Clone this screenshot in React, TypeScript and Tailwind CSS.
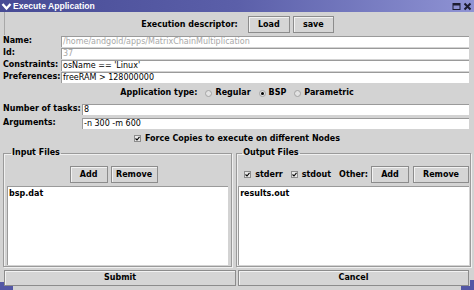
import React from "react";

const font = "font-['DejaVu_Sans',sans-serif]";

function Btn({ children, className = "" }: { children: React.ReactNode; className?: string }) {
  return (
    <div
      className={`flex items-center justify-center border border-[#8c8c8c] bg-[#d5d5d5] text-[8px] font-bold text-black shadow-[inset_1px_1px_0_#f2f2f2] ${className}`}
    >
      {children}
    </div>
  );
}

function Field({ value, disabled = false }: { value: string; disabled?: boolean }) {
  return (
    <div
      className={`flex h-[11px] flex-1 items-center overflow-hidden border-t border-l border-[#9a9a9a] bg-white pl-[1px] text-[8px] font-normal leading-none ${
        disabled ? "text-[#a8a8a8]" : "text-black"
      }`}
    >
      {value}
    </div>
  );
}

function Radio({ label, checked = false }: { label: string; checked?: boolean }) {
  return (
    <div className="flex items-center gap-[3px]">
      <span className="flex h-[7px] w-[7px] items-center justify-center rounded-full border border-[#a4a4a4] bg-[#e2e2e2]">
        {checked && <span className="h-[3px] w-[3px] rounded-full bg-black" />}
      </span>
      <span>{label}</span>
    </div>
  );
}

function Check({ label }: { label: string }) {
  return (
    <div className="flex items-center gap-[4px]">
      <span className="flex h-[7px] w-[7px] items-center justify-center border border-[#8c8c8c] bg-[#e8e8e8]">
        <svg width="5" height="5" viewBox="0 0 5 5">
          <path d="M0.5 2.5 L2 4 L4.5 0.8" stroke="#000" strokeWidth="1.1" fill="none" />
        </svg>
      </span>
      <span>{label}</span>
    </div>
  );
}

function Panel({ title, className = "", children }: { title: string; className?: string; children: React.ReactNode }) {
  return (
    <fieldset
      className={`flex flex-col border border-[#9a9a9a] shadow-[1px_1px_0_#f0f0f0,inset_1px_1px_0_#f0f0f0] ${className}`}
    >
      <legend className="ml-[4px] px-[1px] text-[8px] font-bold leading-[10px]">{title}</legend>
      {children}
    </fieldset>
  );
}

export default function App() {
  return (
    <div className={`relative flex h-[290px] w-[474px] flex-col overflow-hidden bg-[#d3d3d3] text-black ${font}`}>
      {/* title bar */}
      <div className="flex h-[12px] shrink-0 items-center bg-gradient-to-r from-[#474b95] via-[#5b5fa9] to-[#8f93d4]">
        <svg width="11" height="11" viewBox="0 0 11 11" className="ml-[1px]">
          <path d="M1.5 3 L5.5 7.5 L9.5 3" stroke="#fff" strokeWidth="2.4" fill="none" />
        </svg>
        <span className="ml-[1px] font-['Liberation_Sans',sans-serif] text-[8.6px] font-bold leading-none text-white">
          Execute Application
        </span>
        <div className="ml-auto mr-[2px] flex items-center gap-[2px]">
          <svg width="9" height="9" viewBox="0 0 9 9">
            <rect x="1" y="1.5" width="7" height="6" fill="none" stroke="#1c1c30" strokeWidth="1" />
            <rect x="1" y="1.5" width="7" height="2" fill="#1c1c30" />
          </svg>
          <svg width="9" height="9" viewBox="0 0 9 9">
            <path d="M1.5 1.5 L7.5 7.5 M7.5 1.5 L1.5 7.5" stroke="#1c1c30" strokeWidth="2" />
          </svg>
        </div>
      </div>

      {/* descriptor row */}
      <div className="ml-[4px] flex h-[23px] shrink-0 items-center justify-center border-l border-[#a8a8a8] pr-[4px] pt-[2px] text-[8px] font-bold">
        <span className="mr-[10px]">Execution descriptor:</span>
        <Btn className="h-[17px] w-[42px]">Load</Btn>
        <Btn className="ml-[3px] h-[17px] w-[41px]">save</Btn>
      </div>

      {/* descriptor fields */}
      <div className="flex flex-col pr-[5px] text-[8px] font-bold">
        {[
          { l: "Name:", v: "/home/andgold/apps/MatrixChainMultiplication", d: true },
          { l: "Id:", v: "37", d: true },
          { l: "Constraints:", v: "osName == 'Linux'", d: false },
          { l: "Preferences:", v: "freeRAM > 128000000", d: false },
        ].map((r) => (
          <div key={r.l} className="flex h-[12px] items-center">
            <span className="w-[61px] shrink-0 whitespace-nowrap pl-[3px] leading-none">{r.l}</span>
            <Field value={r.v} disabled={r.d} />
          </div>
        ))}
      </div>

      {/* application type */}
      <div className="flex h-[20px] items-center justify-center gap-[8px] text-[8px] font-bold">
        <span>Application type:</span>
        <Radio label="Regular" />
        <Radio label="BSP" checked />
        <Radio label="Parametric" />
      </div>

      {/* tasks */}
      <div className="flex flex-col gap-[2px] pr-[5px] text-[8px] font-bold">
        <div className="flex h-[12px] items-center">
          <span className="w-[82px] shrink-0 whitespace-nowrap pl-[3px] leading-none">Number of tasks:</span>
          <Field value="8" />
        </div>
        <div className="flex h-[12px] items-center">
          <span className="w-[82px] shrink-0 whitespace-nowrap pl-[3px] leading-none">Arguments:</span>
          <Field value="-n 300 -m 600" />
        </div>
      </div>

      {/* force copies */}
      <div className="flex h-[19px] items-center justify-center text-[8px] font-bold">
        <Check label="Force Copies to execute on different Nodes" />
      </div>

      {/* files panels */}
      <div className="flex h-[119px] shrink-0 gap-[4px] pl-[3px] pr-[3px]">
        <Panel title="Input Files" className="w-[232px] px-[3px] pb-[1px]">
          <div className="flex h-[28px] items-end justify-center gap-[3px] pb-[3px] pr-[8px]">
            <Btn className="h-[17px] w-[38px]">Add</Btn>
            <Btn className="h-[17px] w-[47px]">Remove</Btn>
          </div>
          <div className="flex-1 border-t border-l border-[#9a9a9a] bg-white pl-[1px] pt-[1px] text-[8px] font-bold leading-[11px]">
            bsp.dat
          </div>
        </Panel>
        <Panel title="Output Files" className="flex-1 px-[1px] pb-[1px]">
          <div className="flex h-[28px] items-end justify-center pb-[3px] pl-[6px] text-[8px] font-bold">
            <div className="flex h-[17px] items-center">
              <Check label="stderr" />
              <div className="ml-[8px]">
                <Check label="stdout" />
              </div>
              <span className="ml-[8px]">Other:</span>
            </div>
            <Btn className="ml-[3px] h-[17px] w-[38px]">Add</Btn>
            <Btn className="ml-[4px] h-[17px] w-[56px]">Remove</Btn>
          </div>
          <div className="flex-1 border-t border-l border-[#9a9a9a] bg-white pl-[1px] pt-[1px] text-[8px] font-bold leading-[11px]">
            results.out
          </div>
        </Panel>
      </div>

      {/* submit / cancel */}
      <div className="mt-[3px] flex shrink-0 gap-[2px] pl-[4px] pr-[5px]">
        <Btn className="h-[16px] w-[232px]">Submit</Btn>
        <Btn className="h-[16px] flex-1">Cancel</Btn>
      </div>

      {/* resize corners of the window frame */}
      <svg width="13" height="8" viewBox="0 0 13 8" className="absolute bottom-0 left-0">
        <path d="M0 0 H4 V4 H13 V8 H0 Z" fill="#5357a5" />
      </svg>
      <svg width="13" height="10" viewBox="0 0 13 10" className="absolute bottom-0 right-0">
        <path d="M9 0 H13 V10 H0 V6 H9 Z" fill="#5357a5" />
      </svg>
    </div>
  );
}
